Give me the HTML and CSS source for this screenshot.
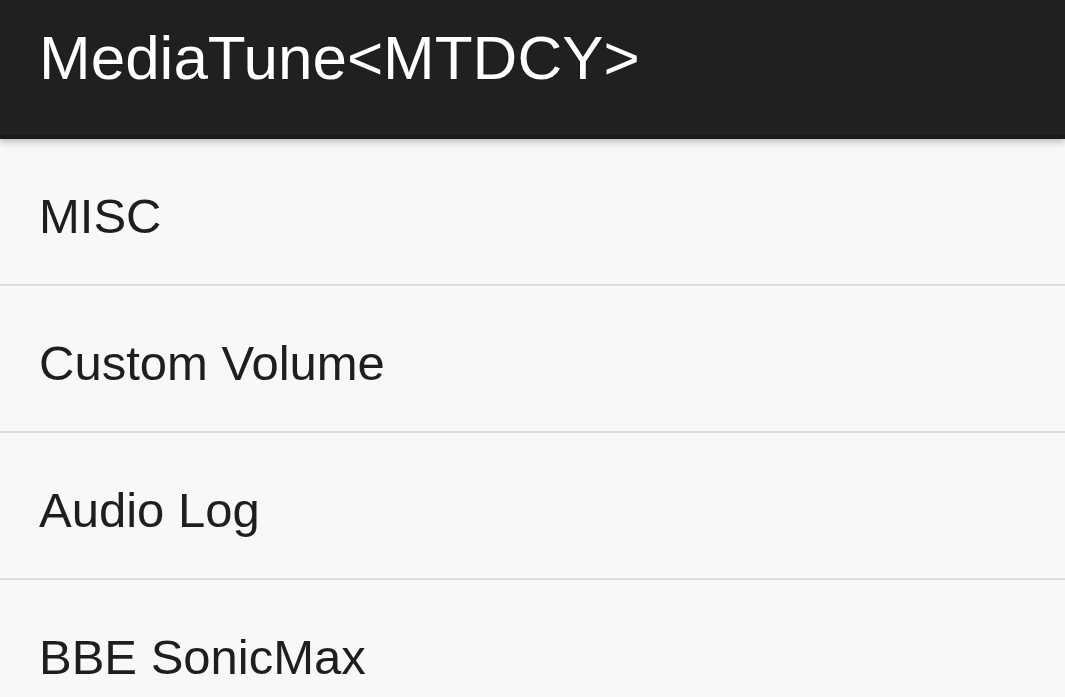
FILE: index.html
```html
<!DOCTYPE html>
<html>
<head>
<meta charset="utf-8">
<link rel="stylesheet" href="styles.css">
</head>
<body>
<header class="appbar"><h1 class="title">MediaTune&lt;MTDCY&gt;</h1></header>
<ul class="menu">
  <li class="item">MISC</li>
  <li class="item">Custom Volume</li>
  <li class="item">Audio Log</li>
  <li class="item">BBE SonicMax</li>
</ul>
</body>
</html>
```
FILE: styles.css
```css
html, body {
  margin: 0;
  padding: 0;
  height: 100%;
  overflow: hidden;
}
body {
  background: #f8f8f8;
  font-family: "Liberation Sans", Arial, sans-serif;
}
.appbar {
  position: relative;
  z-index: 1;
  height: 139px;
  box-sizing: border-box;
  background: #202020;
  border-bottom: 4px solid #1a1a1a;
  padding: 22px 0 0 39px;
  box-shadow: 0 3px 7px rgba(0, 0, 0, 0.25);
}
.title {
  margin: 0;
  font-weight: normal;
  font-size: 62px;
  line-height: 71px;
  color: #ffffff;
  text-shadow: 0 0 1px #000;
}
.menu {
  list-style: none;
  margin: 0;
  padding: 0;
}
.item {
  height: 147px;
  box-sizing: border-box;
  display: flex;
  align-items: center;
  padding: 9px 0 0 39px;
  font-size: 49px;
  color: #1e1e1e;
  border-bottom: 2px solid #dcdcdc;
}
```
